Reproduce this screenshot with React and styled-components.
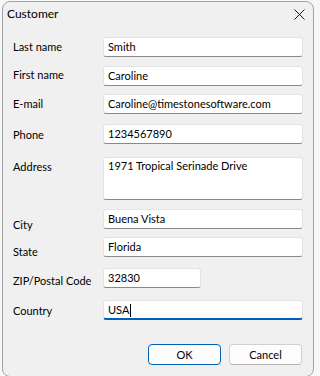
import React from "react"
import styled, { createGlobalStyle } from "styled-components"

const GlobalStyle = createGlobalStyle`
	html, body {
		margin: 0;
		padding: 0;
		background: #f7f7f7;
		font-family: Lato, "Noto Sans", sans-serif;
		font-size: 11px;
		color: #000;
	}
`

const Window = styled.div`
	box-sizing: border-box;
	margin: 1px 0 0 2px;
	width: 312px;
	height: 376px;
	background: #f0f0f0;
	border: 1px solid #a3a3a3;
	border-radius: 8px;
	overflow: hidden;
`

const TitleBar = styled.div`
	height: 24px;
	display: flex;
	align-items: center;
	justify-content: space-between;
	padding: 0 8px 0 4px;
`

const Title = styled.span`
	font-size: 12px;
	line-height: 16px;
`

const CloseButton = styled.div`
	width: 12px;
	height: 12px;
	display: flex;
	align-items: center;
	justify-content: center;
`

const Form = styled.div`
	padding: 11px 0 0 10px;
	display: flex;
	flex-direction: column;
`

const Row = styled.div`
	display: flex;
	align-items: flex-start;
	height: ${(p) => p.$height || 20}px;
	margin-top: ${(p) => p.$gap || 0}px;
`

const Label = styled.div`
	width: 90px;
	line-height: 16px;
	margin-top: ${(p) => p.$dy + 2}px;
	white-space: nowrap;
`

const Field = styled.div`
	box-sizing: border-box;
	width: ${(p) => p.$width || 200}px;
	height: ${(p) => p.$height || 20}px;
	background: #fff;
	border: 1px solid #e3e3e3;
	border-bottom: ${(p) => (p.$focus ? "2px solid #005fb8" : "1px solid #8a8a8a")};
	border-radius: 3px;
	padding: ${(p) => (p.$multi ? "0 4px" : "1px 4px 0")};
	line-height: 16px;
	white-space: nowrap;
	overflow: hidden;
`

const Caret = styled.span`
	display: inline-block;
	width: 1px;
	height: 13px;
	background: #000;
	vertical-align: -3px;
	margin-left: 1px;
`

const ButtonBar = styled.div`
	display: flex;
	justify-content: flex-end;
	gap: 8px;
	margin: 24px 11px 0 0;
`

const Button = styled.div`
	box-sizing: border-box;
	width: 73px;
	height: 21px;
	display: flex;
	align-items: center;
	justify-content: center;
	background: #fdfdfd;
	border: 1px solid ${(p) => (p.$primary ? "#005fb8" : "#d0d0d0")};
	border-bottom-color: ${(p) => (p.$primary ? "#005fb8" : "#b5b5b5")};
	border-radius: 4px;
	line-height: 16px;
`

const fields = [
	{ label: "Last name", value: "Smith", gap: 0, dy: 0 },
	{ label: "First name", value: "Caroline", gap: 9, dy: -1 },
	{ label: "E-mail", value: "Caroline@timestonesoftware.com", gap: 8, dy: 0 },
	{ label: "Phone", value: "1234567890", gap: 10, dy: 1 },
	{ label: "Address", value: "1971 Tropical Serinade Drive", gap: 13, dy: 0, height: 43, multi: true },
	{ label: "City", value: "Buena Vista", gap: 9, dy: 6 },
	{ label: "State", value: "Florida", gap: 8, dy: 5 },
	{ label: "ZIP/Postal Code", value: "32830", gap: 11, dy: 3, width: 98 },
	{ label: "Country", value: "USA", gap: 12, dy: 1, focus: true },
]

const App = () => {
	return (
		<>
			<GlobalStyle />
			<Window>
				<TitleBar>
					<Title>Customer</Title>
					<CloseButton>
						<svg width="11" height="11" viewBox="0 0 11 11">
							<path d="M0.5 0.5 L10.5 10.5 M10.5 0.5 L0.5 10.5" stroke="#1b1b1b" strokeWidth="1" />
						</svg>
					</CloseButton>
				</TitleBar>
				<Form>
					{fields.map((f) => (
						<Row key={f.label} $gap={f.gap} $height={f.height}>
							<Label $dy={f.dy}>{f.label}</Label>
							<Field $width={f.width} $height={f.height} $multi={f.multi} $focus={f.focus}>
								{f.value}
								{f.focus && <Caret />}
							</Field>
						</Row>
					))}
				</Form>
				<ButtonBar>
					<Button $primary>OK</Button>
					<Button>Cancel</Button>
				</ButtonBar>
			</Window>
		</>
	)
}

export default App
